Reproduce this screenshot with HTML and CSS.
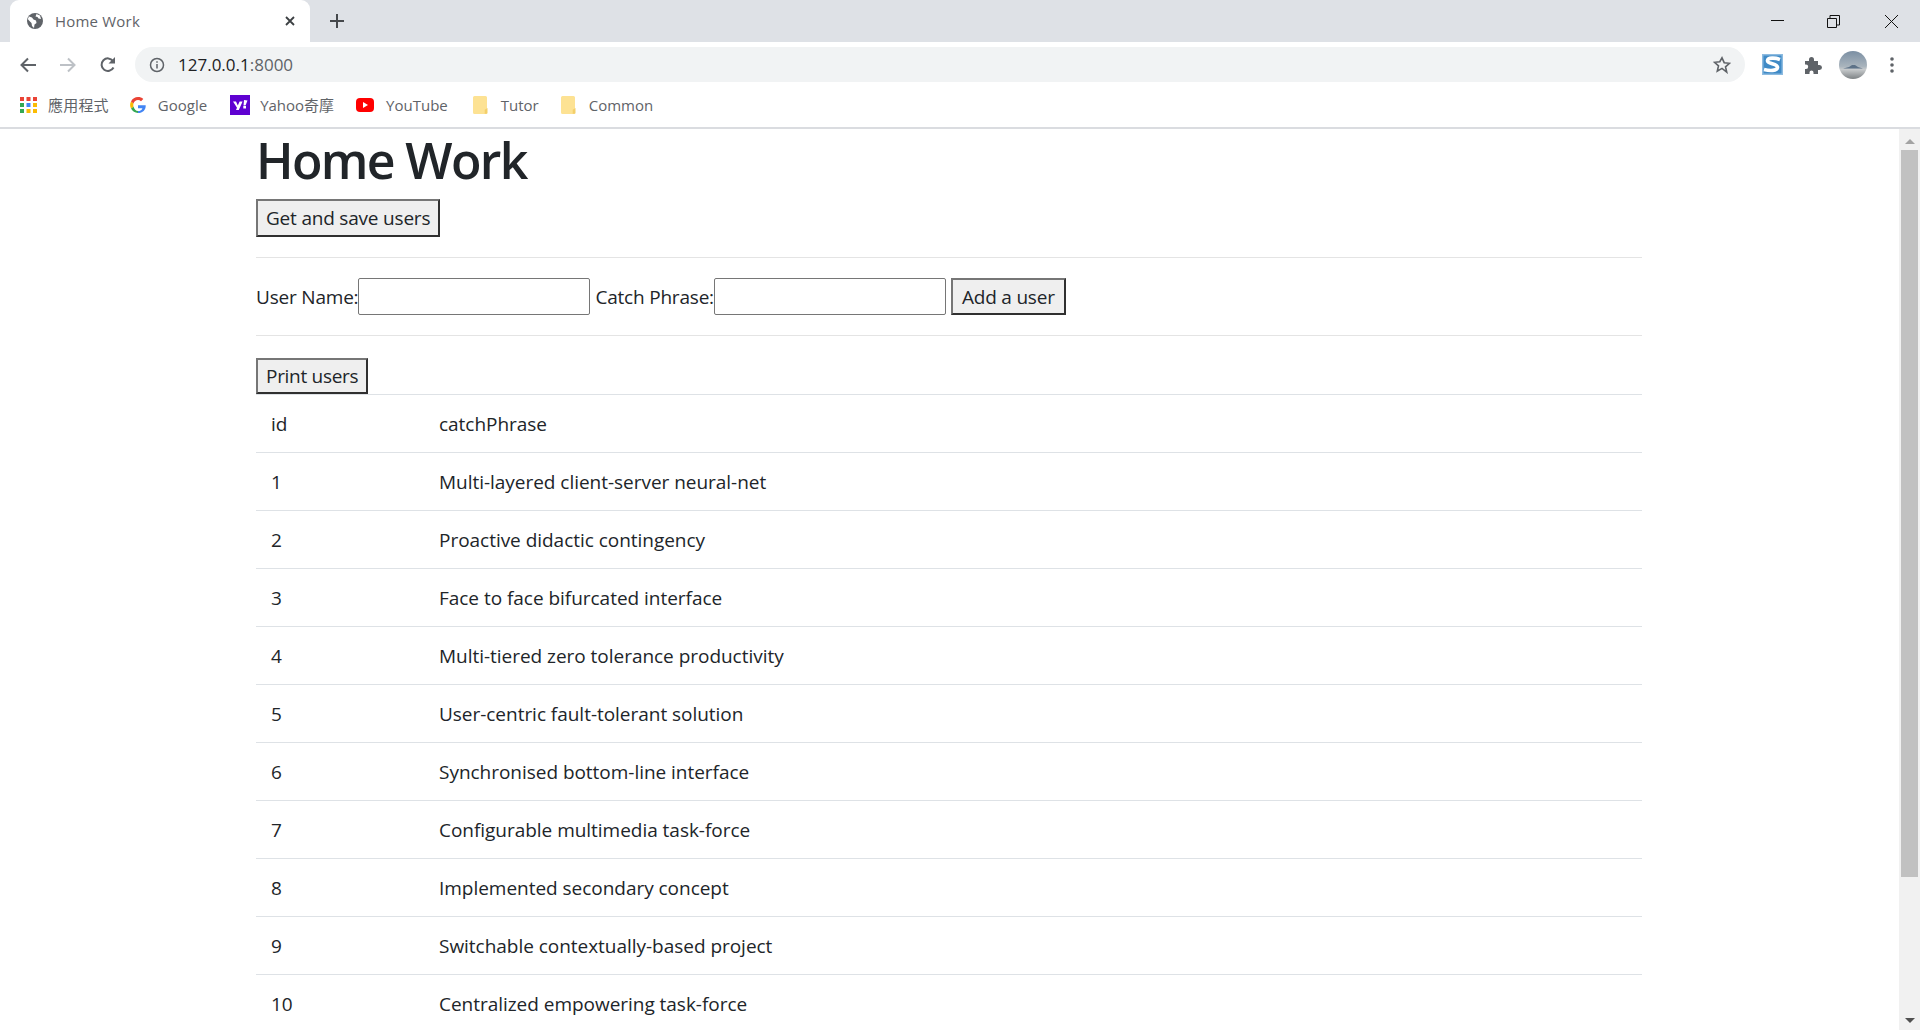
FILE: index.html
```html
<!doctype html>
<html>
<head>
<meta http-equiv="Content-Type" content="text/html; charset=utf-8"/>
<title>Home Work</title>
<link rel="stylesheet" href="styles.css">
</head>

<body>

<div class="tabstrip">
	<div class="tab">
		<svg class="favicon" width="16" height="16" viewBox="0 0 16 16"><circle cx="8" cy="8" r="8" fill="#5f6368"/><path d="M2 3.500l3 1 1.500 2L9 7.500l.5 2.500-2 1.500-.5 3.500-2-2-.5-3L2 7.500 .8 6zM9.500 1l3.500 1.500 1 3.500-2.500-.5-1-1.500-2-.5z" fill="#fff"/></svg>
		<span class="tab-title">Home Work</span>
		<svg class="tab-close" width="10" height="10" viewBox="0 0 10 10"><path d="M1 1l8 8M9 1l-8 8" stroke="#3c4043" stroke-width="1.800"/></svg>
	</div>
	<svg class="new-tab" width="14" height="14" viewBox="0 0 14 14"><path d="M7 0v14M0 7h14" stroke="#45484c" stroke-width="2"/></svg>
	<div class="win-btns">
		<svg width="13" height="13" viewBox="0 0 13 13"><path d="M0 5.500h13" stroke="#111" stroke-width="1"/></svg>
		<svg class="win-restore" width="13" height="13" viewBox="0 0 13 13"><path d="M.5 3.500h9v9h-9zM3 3.500V.5h9.500V10H9.500" fill="none" stroke="#111"/></svg>
		<svg width="13" height="13" viewBox="0 0 13 13"><path d="M0 0l13 13M13 0L0 13" stroke="#111"/></svg>
	</div>
</div>

<div class="toolbar">
	<svg class="nav-btn" width="16" height="16" viewBox="0 0 16 16"><path d="M16 8H2M8 1.500L1.500 8 8 14.500" fill="none" stroke="#5f6368" stroke-width="2"/></svg>
	<svg class="nav-btn off" width="16" height="16" viewBox="0 0 16 16"><path d="M0 8h14M8 1.500L14.500 8 8 14.500" fill="none" stroke="#bdc1c6" stroke-width="2"/></svg>
	<svg class="nav-btn" width="16" height="16" viewBox="0 0 16 16"><path d="M13.500 10.500A6.300 6.300 0 1 1 13 4" fill="none" stroke="#5f6368" stroke-width="2"/><path d="M15 0v6.500H8.500z" fill="#5f6368"/></svg>
	<div class="omnibox">
		<svg width="16" height="16" viewBox="0 0 16 16"><circle cx="8" cy="8" r="6.500" fill="none" stroke="#5f6368" stroke-width="1.500"/><path d="M8 7v4.500M8 4.300v1.500" stroke="#5f6368" stroke-width="1.500"/></svg>
		<span class="url">127.0.0.1<span class="port">:8000</span></span>
		<svg class="star" width="18" height="18" viewBox="0 0 18 18"><path d="M9 1.800l2.200 4.900 5.300.6-4 3.500 1.200 5.300L9 12.400l-4.700 2.700 1.200-5.300-4-3.500 5.300-.6z" fill="none" stroke="#5f6368" stroke-width="1.600"/></svg>
	</div>
	<svg class="ext-s" width="21" height="21" viewBox="0 0 21 21"><rect width="21" height="21" fill="#8dbbe0"/><rect x="1.500" y="1.500" width="18" height="18" fill="#3f8ac6"/><path d="M18 5.500C13 3.500 6 3.500 5.500 6.500 5 10 16 9.500 15.500 13.500 15 17 8 17 2 15.500" fill="none" stroke="#fff" stroke-width="3.600"/></svg>
	<svg class="puzzle" width="18" height="18" viewBox="0 0 18 18"><path d="M1 5h4V3.500a2.500 2.500 0 0 1 5 0V5h4v4h1.500a2.500 2.500 0 0 1 0 5H14v4H9.500v-1.500a2 2 0 0 0-4 0V18H1v-5h1a2.200 2.200 0 0 0 0-4.400H1z" fill="#5f6368"/></svg>
	<div class="avatar"><svg width="28" height="28" viewBox="0 0 28 28"><path d="M4 17.500l6-1.500 3-2h3l3 2 5 1.500z" fill="#5d7288"/></svg></div>
	<svg class="dots" width="4" height="16" viewBox="0 0 4 16"><circle cx="2" cy="2" r="1.800" fill="#5f6368"/><circle cx="2" cy="8" r="1.800" fill="#5f6368"/><circle cx="2" cy="14" r="1.800" fill="#5f6368"/></svg>
</div>

<div class="bookmarks">
	<a class="bm bm-apps">
		<svg width="17" height="16" viewBox="0 0 17 16">
			<rect width="4" height="4" fill="#ea4335"/><rect x="6.500" width="4" height="4" fill="#ea4335"/><rect x="13" width="4" height="4" fill="#ea4335"/>
			<rect y="6" width="4" height="4" fill="#34a853"/><rect x="6.500" y="6" width="4" height="4" fill="#4285f4"/><rect x="13" y="6" width="4" height="4" fill="#fbbc04"/>
			<rect y="12" width="4" height="4" fill="#34a853"/><rect x="6.500" y="12" width="4" height="4" fill="#fbbc04"/><rect x="13" y="12" width="4" height="4" fill="#fbbc04"/>
		</svg>
		<span>應用程式</span>
	</a>
	<a class="bm bm-google">
		<svg width="16" height="16" viewBox="0 0 16 16"><path d="M15.700 8.200H8v3h4.400c-.4 1.800-2.200 2.900-4.400 2.900V16c4.600 0 8-3.100 7.700-7.800z" fill="#4285f4"/><path d="M3.500 9.600L1 11.600C2.300 14.300 5 16 8 16v-1.900c-2.100 0-3.900-1.800-4.500-4.500z" fill="#34a853"/><path d="M3.500 9.600c-.3-1-.3-2.200 0-3.200L1 4.400c-1.200 2.300-1.200 5 0 7.200z" fill="#fbbc04"/><path d="M8 3c1.100 0 2.200.4 3 1.200l2.300-2.300C11.900.6 10 0 8 0 5 0 2.300 1.700 1 4.400l2.500 2C4.100 4.400 5.900 3 8 3z" fill="#ea4335"/></svg>
		<span>Google</span>
	</a>
	<a class="bm bm-yahoo">
		<svg width="20" height="20" viewBox="0 0 20 20"><rect width="20" height="20" fill="#5f01d1"/><path d="M3 6.500h3l1.800 4 1.800-4h3L8.800 15H6l1-2.300zM13.300 11h2.700v2.600h-2.700zM14 5l3.500.4-2 5h-2z" fill="#fff"/></svg>
		<span>Yahoo奇摩</span>
	</a>
	<a class="bm bm-yt">
		<svg width="18" height="14" viewBox="0 0 18 14"><rect width="18" height="14" rx="4" fill="#f00"/><path d="M7 4l5 3-5 3z" fill="#fff"/></svg>
		<span>YouTube</span>
	</a>
	<a class="bm bm-tutor">
		<svg width="15" height="18" viewBox="0 0 15 18"><path d="M1.500 0h11a1.500 1.500 0 0 1 1.500 1.500V17a1 1 0 0 1-1 1H1.500A1.500 1.500 0 0 1 0 16.500v-15A1.500 1.500 0 0 1 1.500 0z" fill="#fde293"/><path d="M14.500 12v5a.800.800 0 0 1-.800.800h-2v-4z" fill="#f3cf6a"/></svg>
		<span>Tutor</span>
	</a>
	<a class="bm bm-common">
		<svg width="15" height="18" viewBox="0 0 15 18"><path d="M1.500 0h11a1.500 1.500 0 0 1 1.500 1.500V17a1 1 0 0 1-1 1H1.500A1.500 1.500 0 0 1 0 16.500v-15A1.500 1.500 0 0 1 1.500 0z" fill="#fde293"/><path d="M14.500 12v5a.800.800 0 0 1-.800.800h-2v-4z" fill="#f3cf6a"/></svg>
		<span>Common</span>
	</a>
</div>

<div class="viewport">
	<div class="page">
		<div class="container">
			<h1>Home Work</h1>
			<button class="btn-get">Get and save users</button>
			<hr class="hr-first">
			<form class="add-form">
				<label>User Name:</label><input type="text">
				<label class="lb2">Catch Phrase:</label><input type="text">
				<button type="button" class="btn-add">Add a user</button>
			</form>
			<hr class="hr-second">
			<button class="btn-print">Print users</button>
			<table>
				<tr><td class="col-id">id</td><td>catchPhrase</td></tr>
				<tr><td class="col-id">1</td><td>Multi-layered client-server neural-net</td></tr>
				<tr><td class="col-id">2</td><td>Proactive didactic contingency</td></tr>
				<tr><td class="col-id">3</td><td>Face to face bifurcated interface</td></tr>
				<tr><td class="col-id">4</td><td>Multi-tiered zero tolerance productivity</td></tr>
				<tr><td class="col-id">5</td><td>User-centric fault-tolerant solution</td></tr>
				<tr><td class="col-id">6</td><td>Synchronised bottom-line interface</td></tr>
				<tr><td class="col-id">7</td><td>Configurable multimedia task-force</td></tr>
				<tr><td class="col-id">8</td><td>Implemented secondary concept</td></tr>
				<tr><td class="col-id">9</td><td>Switchable contextually-based project</td></tr>
				<tr><td class="col-id">10</td><td>Centralized empowering task-force</td></tr>
			</table>
		</div>
	</div>
	<div class="scrollbar">
		<span class="arrow-up"></span>
		<div class="thumb"></div>
		<span class="arrow-down"></span>
	</div>
</div>

</body>
</html>
```

FILE: styles.css
```css
*{ box-sizing:border-box;}
html,body{ margin:0; padding:0; height:100%; overflow:hidden;}
body{ width:1920px; height:1030px; background:#fff; font-family:"Open Sans","Noto Sans CJK TC",sans-serif; color:#212529;}

/* browser frame */
.tabstrip{ height:42px; background:#dee1e6; display:flex; align-items:center; padding-left:10px;}
.tab{ width:300px; height:42px; background:#fff; border-radius:9px 9px 0 0; display:flex; align-items:center; padding:0 15px 0 17px;}
.favicon{ flex:none;}
.tab-title{ margin-left:12px; flex:1; font-size:15px; letter-spacing:.2px; color:#5f6368;}
.new-tab{ margin-left:20px;}
.win-btns{ margin-left:auto; display:flex; gap:43px; padding-right:22px;}
.win-restore{ margin-right:2px;}

.toolbar{ height:42px; background:#fff; display:flex; align-items:center; padding:3px 0 0 20px;}
.nav-btn{ flex:none; margin-right:24px;}
.nav-btn:nth-child(3){ margin-right:19px;}
.omnibox{ width:1610px; height:35px; background:#f1f3f4; border-radius:18px; display:flex; align-items:center; padding:0 14px 0 14px;}
.url{ margin-left:13px; font-size:17px; color:#202124;}
.port{ color:#5f6368;}
.star{ margin-left:auto;}
.ext-s{ margin-left:17px; flex:none;}
.puzzle{ margin-left:21px; flex:none;}
.avatar{ margin-left:17px; width:28px; height:28px; border-radius:50%; flex:none; background:linear-gradient(#7b8fa3 0,#a9b4bd 55%,#c7cacc 66%,#7d8285 100%);}
.avatar svg{ display:block;}
.dots{ margin-left:23px; flex:none;}

.bookmarks{ height:45px; background:#fff; border-bottom:2px solid #dadce0; display:flex; align-items:center; padding:0 0 2px 20px; font-size:15px; color:#5f6368;}
.bm{ display:flex; align-items:center;}
.bm span{ white-space:nowrap;}
.bm-apps span{ margin-left:11px; letter-spacing:.2px;}
.bm-google{ margin-left:21px;}
.bm-google span{ margin-left:12px;}
.bm-yahoo{ margin-left:23px;}
.bm-yahoo span{ margin-left:10px;}
.bm-yt{ margin-left:22px;}
.bm-yt span{ margin-left:12px;}
.bm-tutor{ margin-left:25px;}
.bm-tutor span{ margin-left:13px;}
.bm-common{ margin-left:22px;}
.bm-common span{ margin-left:13px;}

/* page */
.viewport{ display:flex; height:901px;}
.page{ flex:1;}
.container{ width:1386px; margin-left:256px;}
h1{ margin:0 0 8px; height:62px; font-size:50px; line-height:62px; font-weight:600; letter-spacing:-1.65px;}
button{ display:block; height:37px; padding:0 8px; background:#efefef; border:2px solid; border-color:#767676 #303030 #303030 #767676; font:inherit; font-size:19px; letter-spacing:-.2px; color:#212529;}
.btn-get{ height:38px;}
hr{ margin:0; border:0; border-top:1px solid #e4e4e4;}
.hr-first{ margin-top:20px;}
.add-form{ margin-top:20px; display:flex; align-items:center; height:37px; font-size:19px; letter-spacing:-.2px;}
.add-form input{ width:232px; height:37px; border:1px solid #767676; border-radius:2px; background:#fff; padding:0;}
.lb2{ margin-left:5px;}
.btn-add{ margin-left:5px; padding:0 9px;}
.hr-second{ margin-top:20px;}
.btn-print{ margin-top:22px; height:36px; letter-spacing:-.3px;}

table{ width:100%; border-collapse:collapse; font-size:19px; letter-spacing:-.03px;}
td{ height:58px; padding:0; border-top:1px solid #dee2e6; vertical-align:middle;}
.col-id{ width:183px; padding-left:15px;}
.scrollbar{ width:21px; background:#f1f1f1; position:relative;}
.thumb{ position:absolute; left:2px; top:21px; width:17px; height:727px; background:#c1c1c1;}
.arrow-up{ position:absolute; left:6px; top:10px; border:5px solid transparent; border-top:0; border-bottom:5px solid #a3a3a3;}
.arrow-down{ position:absolute; left:6px; top:889px; border:5px solid transparent; border-bottom:0; border-top:5px solid #505050;}
```
